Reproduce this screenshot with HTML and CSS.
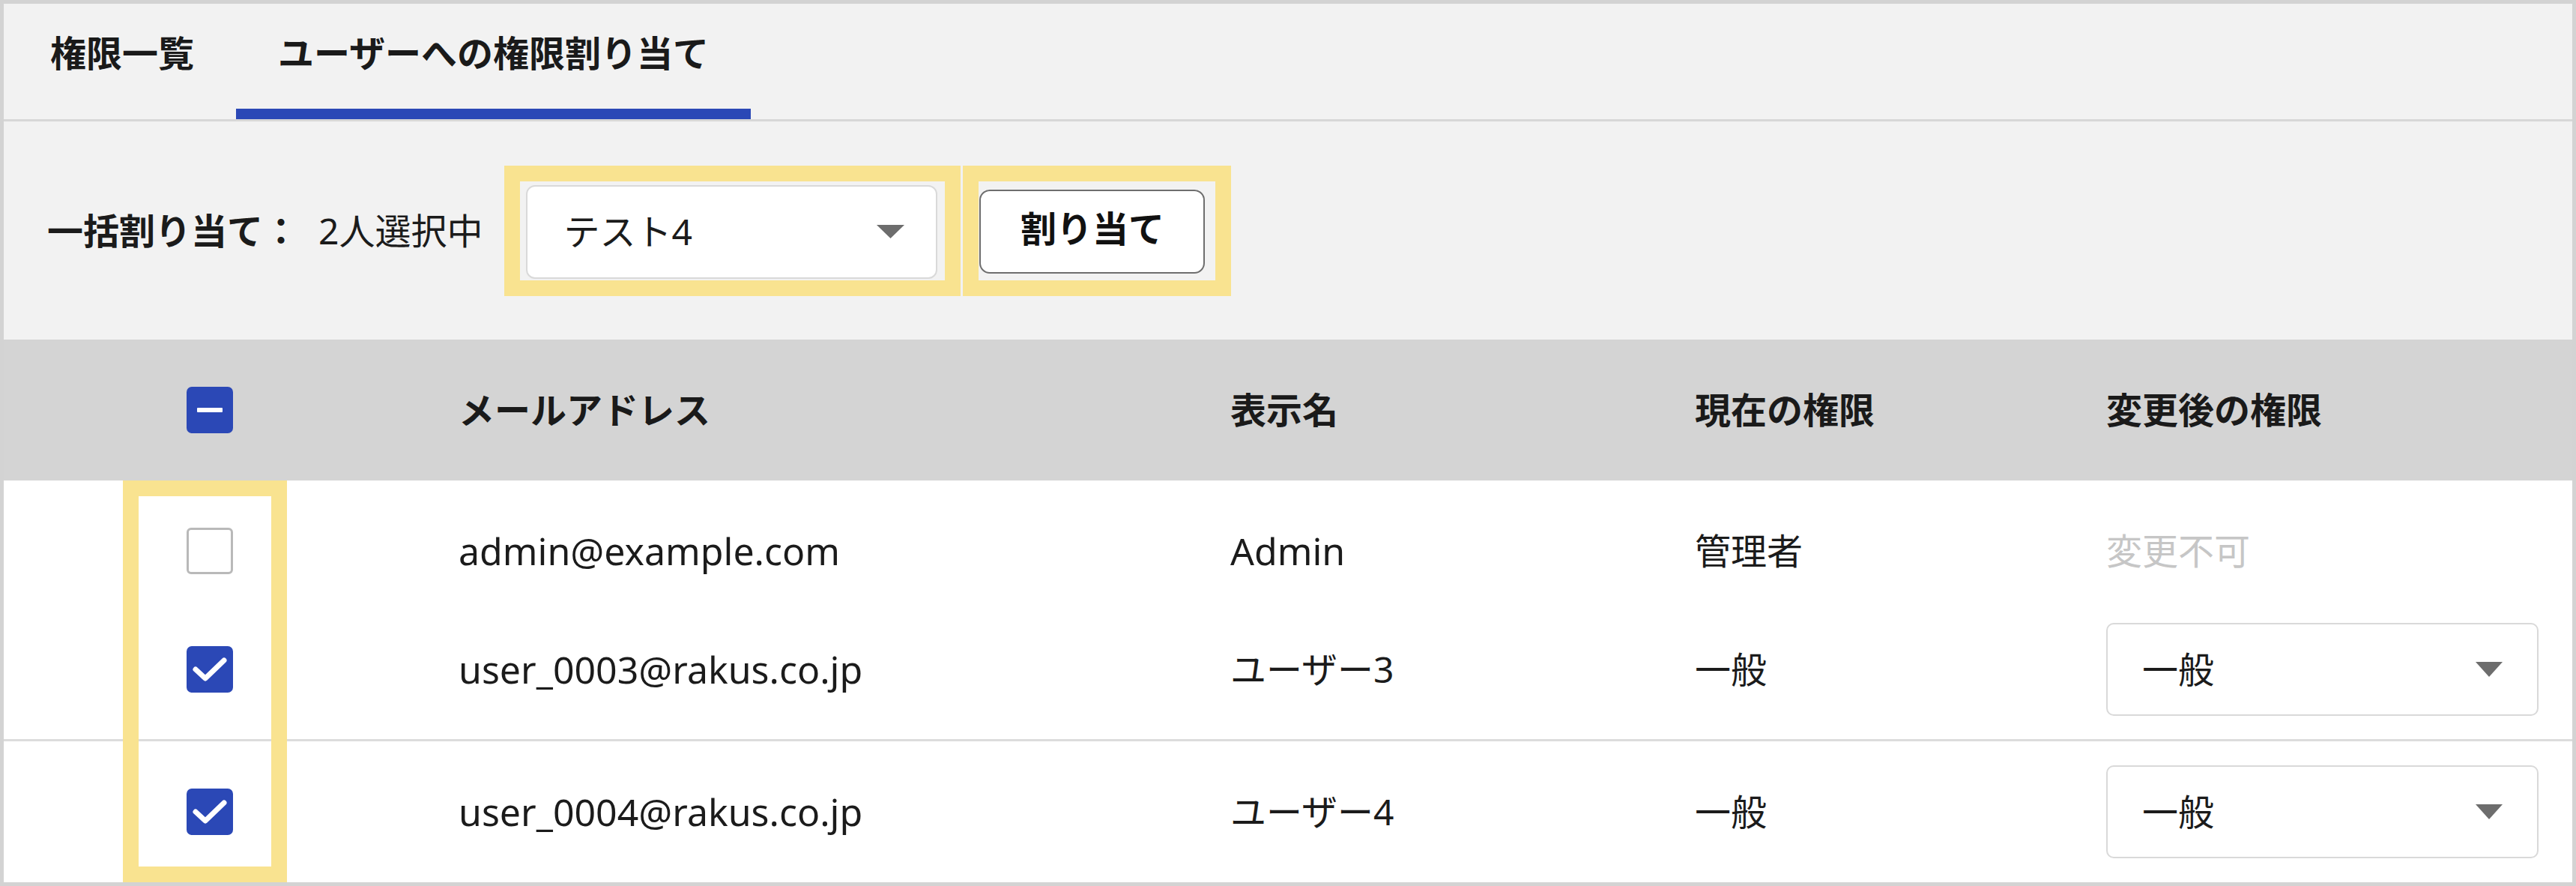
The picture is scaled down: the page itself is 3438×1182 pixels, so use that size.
FILE: index.html
```html
<!DOCTYPE html>
<html lang="ja">
<head>
<meta charset="utf-8">
<title>ユーザーへの権限割り当て</title>
<link rel="stylesheet" href="styles.css">
</head>
<body>
<div class="panel">
  <nav class="tabs">
    <div class="tab">権限一覧</div>
    <div class="tab tab--active">ユーザーへの権限割り当て</div>
  </nav>

  <section class="bulk">
    <span class="bulk__label">一括割り当て：</span>
    <span class="bulk__count">2人選択中</span>
    <div class="mark mark--select">
      <div class="select select--bulk">
        <span>テスト4</span>
        <svg class="caret" width="37" height="18" viewBox="0 0 37 18"><polygon points="0,0 37,0 18.5,18"/></svg>
      </div>
    </div>
    <div class="mark mark--button">
      <button class="btn" type="button">割り当て</button>
    </div>
  </section>

  <div class="table">
    <div class="cols thead">
      <div class="cell cell--check">
        <span class="check check--mixed">
          <svg width="62" height="62" viewBox="0 0 62 62"><rect x="14" y="28" width="34" height="6" rx="1" fill="#fff"/></svg>
        </span>
      </div>
      <div class="cell">メールアドレス</div>
      <div class="cell">表示名</div>
      <div class="cell">現在の権限</div>
      <div class="cell">変更後の権限</div>
    </div>

    <div class="tbody">
      <div class="cols row row--compact">
        <div class="cell cell--check"><span class="check check--off"></span></div>
        <div class="cell cell--latin">admin@example.com</div>
        <div class="cell cell--latin">Admin</div>
        <div class="cell">管理者</div>
        <div class="cell muted">変更不可</div>
      </div>

      <div class="cols row row--divided">
        <div class="cell cell--check">
          <span class="check check--on">
            <svg width="62" height="62" viewBox="0 0 62 62"><path d="M12 31 L25 43 L50 19" fill="none" stroke="#fff" stroke-width="7" stroke-linecap="round" stroke-linejoin="round"/></svg>
          </span>
        </div>
        <div class="cell cell--latin">user_0003@rakus.co.jp</div>
        <div class="cell">ユーザー3</div>
        <div class="cell">一般</div>
        <div class="cell">
          <div class="select select--row">
            <span>一般</span>
            <svg class="caret" width="36" height="20" viewBox="0 0 36 20"><polygon points="0,0 36,0 18,20"/></svg>
          </div>
        </div>
      </div>

      <div class="cols row row--last">
        <div class="cell cell--check">
          <span class="check check--on">
            <svg width="62" height="62" viewBox="0 0 62 62"><path d="M12 31 L25 43 L50 19" fill="none" stroke="#fff" stroke-width="7" stroke-linecap="round" stroke-linejoin="round"/></svg>
          </span>
        </div>
        <div class="cell cell--latin">user_0004@rakus.co.jp</div>
        <div class="cell">ユーザー4</div>
        <div class="cell">一般</div>
        <div class="cell">
          <div class="select select--row">
            <span>一般</span>
            <svg class="caret" width="36" height="20" viewBox="0 0 36 20"><polygon points="0,0 36,0 18,20"/></svg>
          </div>
        </div>
      </div>

      <div class="mark mark--checks"></div>
    </div>
  </div>
</div>
</body>
</html>
```

FILE: styles.css
```css
* {
  box-sizing: border-box;
}

html,
body {
  margin: 0;
  padding: 0;
}

body {
  background: #ffffff;
  font-family: "Noto Sans", "Noto Sans CJK JP", sans-serif;
  font-size: 48px;
  line-height: 1.4;
  color: #1b1b1b;
}

.panel {
  width: 3438px;
  height: 1182px;
  border: 5px solid #d3d3d3;
  background: #ffffff;
  overflow: hidden;
  display: flex;
  flex-direction: column;
}

/* Tabs */
.tabs {
  display: flex;
  flex: none;
  height: 157px;
  padding-left: 6px;
  background: #f2f2f2;
  border-bottom: 3px solid #d7d7d7;
}

.tab {
  display: flex;
  align-items: center;
  padding: 0 56px 8px;
  border-bottom: 14px solid transparent;
  font-weight: 700;
  color: #1a1a1a;
}

.tab--active {
  border-bottom-color: #2b48b6;
}

/* Bulk assign bar */
.bulk {
  display: flex;
  flex: none;
  align-items: center;
  height: 291px;
  padding-left: 58px;
  background: #f2f2f2;
}

.bulk__label {
  font-weight: 700;
}

.bulk__count {
  margin-left: 26px;
}

.mark {
  border: 21px solid #f9e390;
}

.mark--select {
  margin-left: 29px;
  padding: 5px 10px 2px 8px;
}

.mark--button {
  margin-left: 3px;
  padding: 11px 14px 9px 1px;
}

.select {
  display: flex;
  align-items: center;
  justify-content: space-between;
  background: #ffffff;
  border: 2px solid #d9d9d9;
  color: #1b1b1b;
}

.select--bulk {
  width: 549px;
  height: 125px;
  border-radius: 12px;
  padding: 0 42px 0 48px;
}

.select--row {
  width: 577px;
  height: 124px;
  border-radius: 10px;
  padding: 0 46px 0 46px;
}

.caret {
  display: block;
  fill: #6d6d6d;
}

.btn {
  width: 301px;
  height: 112px;
  padding: 0 0 8px;
  border: 2px solid #6e6e6e;
  border-radius: 14px;
  background: #ffffff;
  font: inherit;
  font-weight: 700;
  color: #111111;
  cursor: pointer;
}

/* Table */
.table {
  flex: 1;
  display: flex;
  flex-direction: column;
}

.cols {
  display: grid;
  grid-template-columns: 607px 1030px 620px 549px 1fr;
  align-items: center;
}

.thead {
  height: 188px;
  background: #d4d4d4;
  font-weight: 700;
  color: #1a1a1a;
}

.tbody {
  position: relative;
  flex: 1;
}

.row {
  height: 189px;
}

.row--compact {
  height: 159px;
  padding-top: 29px;
}

.row--divided {
  border-bottom: 3px solid #dcdcdc;
}

.row--last {
  height: 188px;
}

.cell {
  white-space: nowrap;
}

.cell--latin {
  font-size: 50px;
}

.cell--check {
  display: flex;
  padding-left: 244px;
}

.check {
  display: block;
  width: 62px;
  height: 62px;
  border-radius: 7px;
}

.check svg {
  display: block;
}

.check--on,
.check--mixed {
  background: #2b48b6;
}

.check--off {
  background: #ffffff;
  border: 3px solid #b9b9b9;
  border-radius: 6px;
}

.muted {
  color: #c6c6c6;
}

/* Highlight around the row checkboxes (annotation overlay) */
.mark--checks {
  position: absolute;
  top: 0;
  bottom: 0;
  left: 159px;
  width: 219px;
  pointer-events: none;
}
```
